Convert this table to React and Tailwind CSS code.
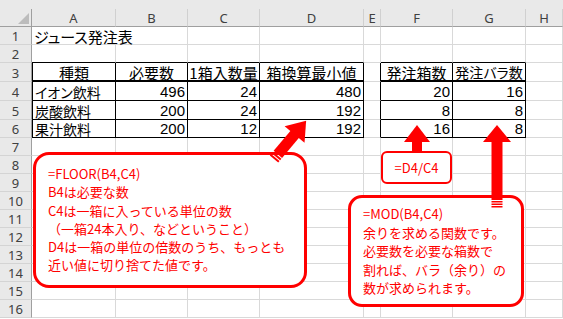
import React from "react";

const GRID =
  "grid grid-cols-[32px_84px_72px_72px_104px_17px_72px_73px_1fr]";

const COLS = ["A", "B", "C", "D", "E", "F", "G", "H"];

const ROW_H = {
  1: "h-[18px]",
  2: "h-[18px]",
  3: "h-[19px]",
  4: "h-[19px]",
  5: "h-[19px]",
  6: "h-[18px]",
};

// k: "title" | "head" | "headsm" | "jp" | "num"
const DATA = {
  1: { 1: { t: "ジュース発注表", a: "l", ov: true, k: "title" } },
  3: {
    1: { t: "種類", a: "c", k: "head" },
    2: { t: "必要数", a: "c", k: "head" },
    3: { t: "1箱入数量", a: "c", k: "head" },
    4: { t: "箱換算最小値", a: "c", k: "head" },
    6: { t: "発注箱数", a: "c", k: "head" },
    7: { t: "発注バラ数", a: "c", k: "headsm" },
  },
  4: {
    1: { t: "イオン飲料", a: "l", k: "jp" },
    2: { t: "496", a: "r", k: "num" },
    3: { t: "24", a: "r", k: "num" },
    4: { t: "480", a: "r", k: "num" },
    6: { t: "20", a: "r", k: "num" },
    7: { t: "16", a: "r", k: "num" },
  },
  5: {
    1: { t: "炭酸飲料", a: "l", k: "jp" },
    2: { t: "200", a: "r", k: "num" },
    3: { t: "24", a: "r", k: "num" },
    4: { t: "192", a: "r", k: "num" },
    6: { t: "8", a: "r", k: "num" },
    7: { t: "8", a: "r", k: "num" },
  },
  6: {
    1: { t: "果汁飲料", a: "l", k: "jp" },
    2: { t: "200", a: "r", k: "num" },
    3: { t: "12", a: "r", k: "num" },
    4: { t: "192", a: "r", k: "num" },
    6: { t: "16", a: "r", k: "num" },
    7: { t: "8", a: "r", k: "num" },
  },
};

const TEXT_CLS = {
  title: "text-[15px] leading-[15px]",
  head: "text-[15px] leading-[15px]",
  headsm: "text-[14px] leading-[15px]",
  jp: "text-[14px] leading-[15px]",
  num: "text-[15px] leading-[15px] font-['Liberation_Sans',sans-serif] pb-[1px]",
};

const inTable = (c) => (c >= 1 && c <= 4) || c === 6 || c === 7;

function borderClass(r, c, ov) {
  if (ov) return "border-b border-[#d9d9d9]";
  if (r >= 3 && r <= 6 && inTable(c)) {
    if (r === 3) {
      if (c === 1) return "border-l border-r border-b-2 border-black";
      return "border-r border-b-2 border-black";
    }
    if (c === 1) return "border-l border-r border-b border-black";
    return "border-r border-b border-black";
  }
  if (r === 2 && inTable(c))
    return "border-r border-b border-[#d9d9d9] border-b-black";
  if (r >= 3 && r <= 6 && c === 5)
    return "border-r border-b border-[#d9d9d9] border-r-black";
  return "border-r border-b border-[#d9d9d9]";
}

function Cell({ r, c }) {
  const d = DATA[r] && DATA[r][c];
  const bc = borderClass(r, c, d && d.ov);
  let just = "justify-start";
  if (d && d.a === "c") just = "justify-center";
  if (d && d.a === "r") just = "justify-end";
  return (
    <div className={`${bc} flex items-end ${just} px-[2px] min-w-0 relative`}>
      {d ? (
        <span
          className={`${TEXT_CLS[d.k]} whitespace-nowrap text-black relative z-10`}
        >
          {d.t}
        </span>
      ) : null}
    </div>
  );
}

function Row({ r }) {
  const h = ROW_H[r] || "h-[18px]";
  return (
    <div className={`${GRID} ${h}`}>
      <div className="border-r border-b border-r-[#9f9f9f] border-b-[#d4d4d4] bg-[#e9e9e9] flex items-end justify-center pb-[1px] text-[13px] leading-[14px] text-[#404040] font-['Noto_Sans',sans-serif]">
        {r}
      </div>
      {[1, 2, 3, 4, 5, 6, 7, 8].map((c) => (
        <Cell key={c} r={r} c={c} />
      ))}
    </div>
  );
}

function Arrows() {
  return (
    <svg
      className="absolute left-0 top-0 pointer-events-none"
      width="563"
      height="319"
      viewBox="0 0 563 319"
    >
      {/* diagonal arrow to D6 */}
      <g transform="translate(274 159) rotate(-50)" fill="#ff0000">
        <rect x="0" y="-5.5" width="2" height="11" />
        <rect x="3" y="-5.5" width="2" height="11" />
        <rect x="6" y="-5.5" width="27" height="11" />
        <polygon points="32,-13 50,0 32,13" />
      </g>
      {/* vertical arrow to F6 */}
      <g fill="#ff0000">
        <polygon points="417,125 430,142 404,142" />
        <rect x="412" y="141" width="10" height="11" />
      </g>
      {/* vertical arrow to G6 */}
      <g fill="#ff0000">
        <polygon points="497,125 511,142 483,142" />
        <rect x="491.5" y="141" width="11" height="59" />
        <rect x="491.5" y="201" width="11" height="1.5" />
        <rect x="491.5" y="203.5" width="11" height="1.5" />
        <rect x="491.5" y="206" width="11" height="1.5" />
      </g>
    </svg>
  );
}

export default function App() {
  const rows = [];
  for (let r = 1; r <= 16; r++) rows.push(r);
  return (
    <div className="relative w-[563px] h-[319px] overflow-hidden bg-white font-['Noto_Sans_CJK_JP',sans-serif] [font-feature-settings:'palt']">
      {/* top strip */}
      <div className="h-[9px] bg-[#e9e9e9]" />
      {/* column header */}
      <div className={`${GRID} h-[18px]`}>
        <div className="border-r border-b border-r-[#9f9f9f] border-b-[#9f9f9f] bg-[#e9e9e9] flex items-end justify-end pr-[2px] pb-[2px]">
          <div className="w-0 h-0 border-l-[11px] border-l-transparent border-b-[11px] border-b-[#bcbcbc]" />
        </div>
        {COLS.map((l) => (
          <div
            key={l}
            className="border-r border-b border-r-[#d0d0d0] border-b-[#9f9f9f] bg-[#e9e9e9] flex items-center justify-center text-[13px] leading-[14px] text-[#404040] font-['Noto_Sans',sans-serif]"
          >
            {l}
          </div>
        ))}
      </div>
      {rows.map((r) => (
        <Row key={r} r={r} />
      ))}

      {/* callout: FLOOR */}
      <div className="absolute left-[33px] top-[152px] w-[274px] h-[136px] border-[3px] border-[#ff0000] rounded-[16px] bg-white pl-[12px] pt-[10px] text-[13px] leading-[18.3px] text-[#ff0000] whitespace-nowrap [font-feature-settings:normal]">
        <div>=FLOOR(B4,C4)</div>
        <div>B4は必要な数</div>
        <div>C4は一箱に入っている単位の数</div>
        <div>（一箱24本入り、などということ）</div>
        <div>D4は一箱の単位の倍数のうち、もっとも</div>
        <div>近い値に切り捨てた値です。</div>
      </div>

      {/* callout: D4/C4 */}
      <div className="absolute left-[381px] top-[151px] w-[71px] h-[33px] border-2 border-[#ff0000] rounded-[6px] bg-white flex items-center justify-center text-[13px] text-[#ff0000] [font-feature-settings:normal]">
        =D4/C4
      </div>

      {/* callout: MOD */}
      <div className="absolute left-[348px] top-[195px] w-[176px] h-[112px] border-[3px] border-[#ff0000] rounded-[14px] bg-white pl-[12px] pt-[7px] text-[13px] leading-[18.5px] text-[#ff0000] whitespace-nowrap [font-feature-settings:normal]">
        <div>=MOD(B4,C4)</div>
        <div>余りを求める関数です。</div>
        <div>必要数を必要な箱数で</div>
        <div>割れば、バラ（余り）の</div>
        <div>数が求められます。</div>
      </div>

      <Arrows />
    </div>
  );
}
